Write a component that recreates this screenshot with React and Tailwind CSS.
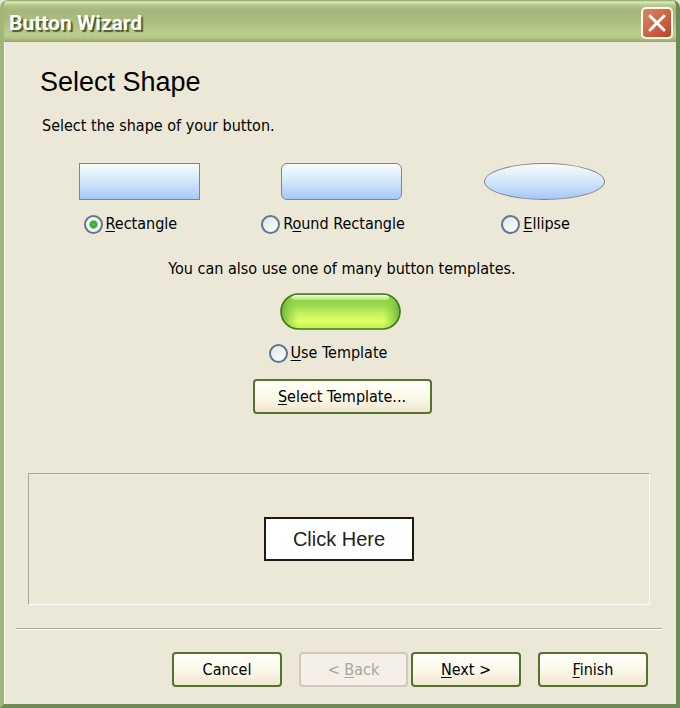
import { useState } from "react";
import clsx from "clsx";

const shapes = [
  { id: "rectangle", before: "", key: "R", after: "ectangle", shape: "rounded-none" },
  { id: "round", before: "R", key: "o", after: "und Rectangle", shape: "rounded-md" },
  { id: "ellipse", before: "", key: "E", after: "llipse", shape: "rounded-[50%]" },
];

function AccessText({ before = "", letter, after = "" }) {
  return (
    <span className="whitespace-pre">
      {before}
      <span className="underline decoration-1 underline-offset-2">{letter}</span>
      {after}
    </span>
  );
}

function WizardButton({ className, children, ...props }) {
  return (
    <button
      type="button"
      className={clsx(
        "h-[35px] rounded-[4px] border-2 text-center",
        "border-[#55722f] bg-linear-to-b from-[#fffffa] via-[#fbf9ea] to-[#f1e6d0]",
        "disabled:border-[#d2c9bd] disabled:bg-none disabled:bg-[#f4efe7] disabled:text-[#aaa79a]",
        className
      )}
      {...props}
    >
      {children}
    </button>
  );
}

function RadioOption({ id, value, onChange, children }) {
  const checked = value === id;
  return (
    <label htmlFor={id} className="flex items-center gap-[3px]">
      <input
        id={id}
        type="radio"
        name="shape"
        checked={checked}
        onChange={() => onChange(id)}
        className={clsx(
          "size-[19px] shrink-0 appearance-none rounded-full border-2 border-[#5c7891]",
          checked
            ? "bg-[radial-gradient(circle,#5cc854_0,#35a030_3px,#f4f8f0_5px)]"
            : "bg-linear-to-br from-[#e2e4e4] to-white"
        )}
      />
      {children}
    </label>
  );
}

export default function App() {
  const [selected, setSelected] = useState("rectangle");

  return (
    <div className="bg-[#e3e8d8]">
      <div className="flex min-h-screen flex-col overflow-hidden rounded-t-lg border-r-4 border-b-4 border-l-4 border-r-[#6c8a54] border-b-[#6f8a54] border-l-[#a2b678] bg-[#ebe8d7] font-['DejaVu_Sans_Condensed','DejaVu_Sans',sans-serif] text-[16px] leading-5 text-black">
        <header className="-mx-1 flex h-[42px] shrink-0 items-center justify-between bg-[linear-gradient(to_bottom,#87a062_0,#e0ecb8_2px,#b7c88c_5px,#a4b77c_10px,#a9bc80_20px,#bccd90_34px,#b4c589_38px,#8fa66c_42px)] pt-1 pr-[7px] pl-[9px]">
          <h1 className="font-[Roboto,sans-serif] text-[21px] leading-6 font-bold text-[#fdfdf5] [text-shadow:2px_2px_1px_#4a5a30]">
            Button Wizard
          </h1>
          <button
            type="button"
            aria-label="Close"
            className="flex size-8 items-center justify-center rounded-[5px] border-2 border-[#fffbe9] bg-linear-to-br from-[#d98668] via-[#cf6545] to-[#b64627]"
          >
            <svg viewBox="0 0 28 28" className="size-7" fill="none" stroke="#fff" strokeWidth="3" strokeLinecap="round">
              <path d="M7 7L21 21M21 7L7 21" />
            </svg>
          </button>
        </header>

        <main className="flex flex-1 flex-col border-l border-[#f8f7ec]">
          <h2 className="mt-6 ml-[35px] font-['Liberation_Sans',Arial,sans-serif] text-[27px] leading-8">
            Select Shape
          </h2>
          <p className="mt-[18px] ml-[37px]">Select the shape of your button.</p>

          <div className="mt-[27px] mr-[30px] ml-[33px] grid grid-cols-3">
            {shapes.map((s) => (
              <div key={s.id} className="flex flex-col items-center">
                <div
                  className={clsx(
                    "h-[37px] w-[121px] border border-[#858585] bg-linear-to-b from-[#f7fdfa] via-[#d3e6fb] to-[#a6c8f6]",
                    s.shape
                  )}
                />
                <div className="mt-[14px] pr-[18px]">
                  <RadioOption id={s.id} value={selected} onChange={setSelected}>
                    <AccessText before={s.before} letter={s.key} after={s.after} />
                  </RadioOption>
                </div>
              </div>
            ))}
          </div>

          <div className="mt-[25px] ml-[3px] flex flex-col items-center">
            <p>You can also use one of many button templates.</p>
            <svg viewBox="0 0 121 37" className="mt-[14px] mr-1 h-[37px] w-[121px]">
              <defs>
                <linearGradient id="gel" x1="0" y1="0" x2="0" y2="1">
                  <stop offset="0" stopColor="#86c840" />
                  <stop offset="0.35" stopColor="#9edb50" />
                  <stop offset="0.55" stopColor="#c2f25c" />
                  <stop offset="0.78" stopColor="#deff68" />
                  <stop offset="1" stopColor="#bdf052" />
                </linearGradient>
                <linearGradient id="gelSides">
                  <stop offset="0" stopColor="#62aa2a" stopOpacity="0.9" />
                  <stop offset="0.06" stopColor="#84ca44" stopOpacity="0.7" />
                  <stop offset="0.14" stopColor="#8ed340" stopOpacity="0" />
                  <stop offset="0.86" stopColor="#8ed340" stopOpacity="0" />
                  <stop offset="0.94" stopColor="#84ca44" stopOpacity="0.7" />
                  <stop offset="1" stopColor="#62aa2a" stopOpacity="0.9" />
                </linearGradient>
                <linearGradient id="gelShine" x1="0" y1="0" x2="0" y2="1">
                  <stop offset="0" stopColor="#f4ffe6" />
                  <stop offset="1" stopColor="#c4ed8e" stopOpacity="0.7" />
                </linearGradient>
              </defs>
              <rect x="1" y="1" width="119" height="35" rx="17.5" fill="url(#gel)" />
              <rect x="1" y="1" width="119" height="35" rx="17.5" fill="url(#gelSides)" stroke="#45751f" strokeWidth="1.6" />
              <path d="M15 2H106Q110 3 109 6Q108 7 104 7H17Q12 7 11 5Q12 3 15 2Z" fill="url(#gelShine)" />
            </svg>
            <div className="mt-[13px] pr-7">
              <RadioOption id="template" value={selected} onChange={setSelected}>
                <AccessText letter="U" after="se Template" />
              </RadioOption>
            </div>
            <WizardButton className="mt-4 w-[179px]">
              <AccessText letter="S" after="elect Template..." />
            </WizardButton>
          </div>

          <section
            aria-label="Preview"
            className="mt-[59px] mr-[26px] ml-[23px] flex h-[132px] items-center justify-center border border-t-[#aaa799] border-r-white border-b-white border-l-[#aaa799]"
          >
            <button
              type="button"
              className="h-11 w-[150px] border-2 border-[#181c14] bg-white font-['Liberation_Sans',Arial,sans-serif] text-[20px] text-[#222]"
            >
              Click Here
            </button>
          </section>

          <hr className="mt-[23px] mr-[14px] ml-[11px] h-0.5 border-t border-b border-t-[#aaa799] border-b-white" />

          <footer className="mt-[22px] mr-[28px] mb-[17px] flex justify-end">
            <WizardButton className="mr-[17px] w-[110px]">Cancel</WizardButton>
            <WizardButton disabled className="mr-[3px] w-[109px]">
              <AccessText before="< " letter="B" after="ack" />
            </WizardButton>
            <WizardButton className="mr-[17px] w-[110px]">
              <AccessText letter="N" after="ext >" />
            </WizardButton>
            <WizardButton className="w-[110px]">
              <AccessText letter="F" after="inish" />
            </WizardButton>
          </footer>
        </main>
      </div>
    </div>
  );
}
